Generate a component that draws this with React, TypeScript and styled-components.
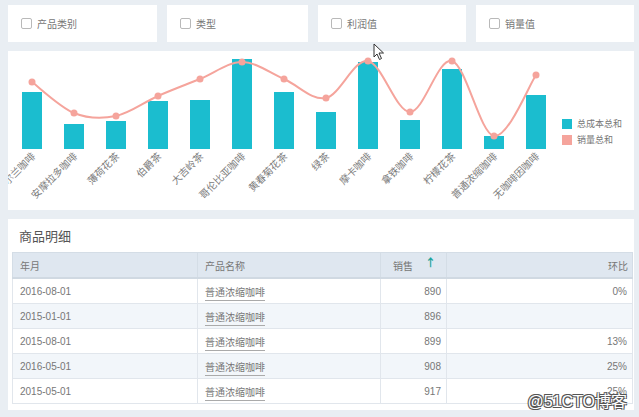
import React from "react";
import styled, { createGlobalStyle } from "styled-components";

const GlobalStyle = createGlobalStyle`
  html, body {
    margin: 0;
    padding: 0;
    background: #e9eef3;
  }
  body {
    font-family: "Liberation Sans", "Noto Sans CJK SC", sans-serif;
    color: #666;
  }
`;

type T_Item = { name: string; cost: number; sales: number };

const ITEMS: T_Item[] = [
  { name: "爱尔兰咖啡", cost: 57, sales: 67 },
  { name: "安摩拉多咖啡", cost: 25, sales: 36 },
  { name: "薄荷花茶", cost: 28, sales: 33 },
  { name: "伯爵茶", cost: 48, sales: 53 },
  { name: "大吉岭茶", cost: 49, sales: 70 },
  { name: "哥伦比亚咖啡", cost: 90, sales: 87 },
  { name: "黄春菊花茶", cost: 57, sales: 70 },
  { name: "绿茶", cost: 37, sales: 51 },
  { name: "摩卡咖啡", cost: 87, sales: 88 },
  { name: "拿铁咖啡", cost: 29, sales: 37 },
  { name: "柠檬花茶", cost: 80, sales: 88 },
  { name: "普通浓缩咖啡", cost: 13, sales: 13 },
  { name: "无咖啡因咖啡", cost: 54, sales: 74 },
];

const ROWS = [
  { date: "2016-08-01", name: "普通浓缩咖啡", sales: 890, ratio: "0%" },
  { date: "2015-01-01", name: "普通浓缩咖啡", sales: 896, ratio: "" },
  { date: "2015-08-01", name: "普通浓缩咖啡", sales: 899, ratio: "13%" },
  { date: "2016-05-01", name: "普通浓缩咖啡", sales: 908, ratio: "25%" },
  { date: "2015-05-01", name: "普通浓缩咖啡", sales: 917, ratio: "-25%" },
];

const FILTERS = ["产品类别", "类型", "利润值", "销量值"];

const BAR = "#1bbdcf";
const LINE = "#f5a49c";
const BASE_Y = 98;

type Pt = { x: number; y: number };

// catmull-rom -> cubic bezier, close to echarts "smooth"
function smoothPath(pts: Pt[]) {
  let d = `M${pts[0].x},${pts[0].y}`;
  for (let i = 0; i < pts.length - 1; i++) {
    const p0 = pts[i - 1] ?? pts[i];
    const p1 = pts[i];
    const p2 = pts[i + 1];
    const p3 = pts[i + 2] ?? p2;
    const c1x = p1.x + (p2.x - p0.x) / 6;
    const c1y = p1.y + (p2.y - p0.y) / 6;
    const c2x = p2.x - (p3.x - p1.x) / 6;
    const c2y = p2.y - (p3.y - p1.y) / 6;
    d += ` C${c1x},${c1y} ${c2x},${c2y} ${p2.x},${p2.y}`;
  }
  return d;
}

function Chart() {
  const pts = ITEMS.map((it, i) => ({ x: 24 + i * 42, y: BASE_Y - it.sales }));
  return (
    <ChartCard>
      <Plot width={554} height={159} viewBox="0 0 554 159">
        {ITEMS.map((it, i) => (
          <rect
            key={it.name}
            x={14 + i * 42}
            y={BASE_Y - it.cost}
            width={20}
            height={it.cost}
            fill={BAR}
          />
        ))}
        <path d={smoothPath(pts)} fill="none" stroke={LINE} strokeWidth={2} />
        {pts.map((p, i) => (
          <circle key={i} cx={p.x} cy={p.y} r={3.5} fill={LINE} />
        ))}
        {ITEMS.map((it, i) => {
          const x = 28 + i * 42;
          const y = 106;
          return (
            <text
              key={it.name}
              x={x}
              y={y}
              textAnchor="end"
              fontSize={10}
              fill="#7a7a7a"
              fontFamily='"Noto Sans CJK SC", sans-serif'
              transform={`rotate(-45 ${x} ${y})`}
            >
              {it.name}
            </text>
          );
        })}
      </Plot>
      <Legend>
        <LegendItem>
          <Swatch $color={BAR} />
          总成本总和
        </LegendItem>
        <LegendItem>
          <Swatch $color={LINE} />
          销量总和
        </LegendItem>
      </Legend>
    </ChartCard>
  );
}

function Cursor() {
  return (
    <CursorBox width={12} height={18} viewBox="0 0 12 18">
      <path d="M1 1 L1 14 L4 11 L6.5 16.5 L8.5 15.5 L6 10 L10.5 10 Z" fill="#fff" stroke="#333" strokeWidth={1} />
    </CursorBox>
  );
}

export default function App() {
  return (
    <Page>
      <GlobalStyle />
      <FilterRow>
        {FILTERS.map((f) => (
          <FilterCard key={f}>
            <Check />
            {f}
          </FilterCard>
        ))}
      </FilterRow>
      <Chart />
      <TableCard>
        <Title>商品明细</Title>
        <Table>
          <colgroup>
            <col style={{ width: 185 }} />
            <col style={{ width: 183 }} />
            <col style={{ width: 66 }} />
            <col style={{ width: 186 }} />
          </colgroup>
          <thead>
            <tr>
              <Th>年月</Th>
              <Th>产品名称</Th>
              <Th $pad={12}>
                销售<SortArrow>↑</SortArrow>
              </Th>
              <Th $align="right">环比</Th>
            </tr>
          </thead>
          <tbody>
            {ROWS.map((r, i) => (
              <Row key={r.date} $alt={i % 2 === 1}>
                <Td>{r.date}</Td>
                <Td>
                  <LinkText>{r.name}</LinkText>
                </Td>
                <Td $align="right">{r.sales}</Td>
                <Td $align="right">{r.ratio}</Td>
              </Row>
            ))}
          </tbody>
        </Table>
      </TableCard>
      <Watermark>@51CTO博客</Watermark>
      <Cursor />
    </Page>
  );
}

const Page = styled.div`
  position: relative;
  width: 639px;
  height: 417px;
  padding: 5px 5px 0 8px;
  box-sizing: border-box;
  display: flex;
  flex-direction: column;
  gap: 9px;
  overflow: hidden;
`;

const FilterRow = styled.div`
  display: grid;
  grid-template-columns: 149px 141px 148px 158px;
  gap: 10px;
`;

const FilterCard = styled.div`
  height: 37px;
  background: #fff;
  display: flex;
  align-items: center;
  gap: 5px;
  padding-left: 13px;
  font-size: 10px;
  color: #777;
  font-family: "Noto Sans CJK SC", sans-serif;
`;

const Check = styled.span`
  width: 9px;
  height: 9px;
  border: 1px solid #b9b9b9;
  border-radius: 2px;
  background: #fff;
`;

const ChartCard = styled.div`
  width: 626px;
  height: 159px;
  background: #fff;
  display: flex;
  align-items: center;
`;

const Plot = styled.svg`
  display: block;
  flex-shrink: 0;
  align-self: flex-start;
`;

const Legend = styled.div`
  display: flex;
  flex-direction: column;
  gap: 6px;
  padding-top: 2px;
`;

const LegendItem = styled.div`
  display: flex;
  align-items: center;
  gap: 5px;
  font-size: 9px;
  color: #777;
  font-family: "Noto Sans CJK SC", sans-serif;
  line-height: 10px;
`;

const Swatch = styled.span<{ $color: string }>`
  width: 10px;
  height: 10px;
  background: ${(p) => p.$color};
`;

const TableCard = styled.div`
  width: 626px;
  height: 191px;
  background: #fff;
  padding: 0 2px 0 4px;
  box-sizing: border-box;
`;

const Title = styled.div`
  height: 33px;
  padding-left: 7px;
  display: flex;
  align-items: center;
  font-size: 13px;
  color: #555;
  font-family: "Noto Sans CJK SC", sans-serif;
`;

const Table = styled.table`
  width: 620px;
  border-collapse: collapse;
  table-layout: fixed;
  font-size: 10px;
  color: #777;
`;

const Th = styled.th<{ $align?: string; $pad?: number }>`
  height: 24px;
  padding: 0 ${(p) => (p.$align === "right" ? 4 : 6)}px 0 ${(p) => p.$pad ?? 7}px;
  background: #dfe7f0;
  border: 1px solid #d4dde6;
  border-bottom: 2px solid #d0d9e2;
  text-align: ${(p) => p.$align ?? "left"};
  font-weight: normal;
  color: #777;
  font-family: "Noto Sans CJK SC", sans-serif;
`;

const SortArrow = styled.span`
  margin-left: 12px;
  color: #1aa39a;
  font-weight: bold;
  font-size: 11px;
  position: relative;
  top: -3px;
`;

const Row = styled.tr<{ $alt: boolean }>`
  background: ${(p) => (p.$alt ? "#f2f6fa" : "#fff")};
`;

const Td = styled.td<{ $align?: string }>`
  height: 24px;
  padding: 0 ${(p) => (p.$align === "right" ? 5 : 6)}px 0 7px;
  border: 1px solid #e1e6ec;
  text-align: ${(p) => p.$align ?? "left"};
  white-space: nowrap;
`;

const LinkText = styled.span`
  font-family: "Noto Sans CJK SC", sans-serif;
  border-bottom: 1px solid #aaa;
  padding-bottom: 1px;
`;

const Watermark = styled.div`
  position: absolute;
  right: 12px;
  top: 388px;
  font-size: 16px;
  color: #fff;
  font-family: "Liberation Sans", "Noto Sans CJK SC", sans-serif;
  text-shadow: -1px -1px 0 #555, 1px -1px 0 #555, -1px 1px 0 #555, 1px 1px 0 #555;
`;

const CursorBox = styled.svg`
  position: absolute;
  left: 373px;
  top: 43px;
`;
